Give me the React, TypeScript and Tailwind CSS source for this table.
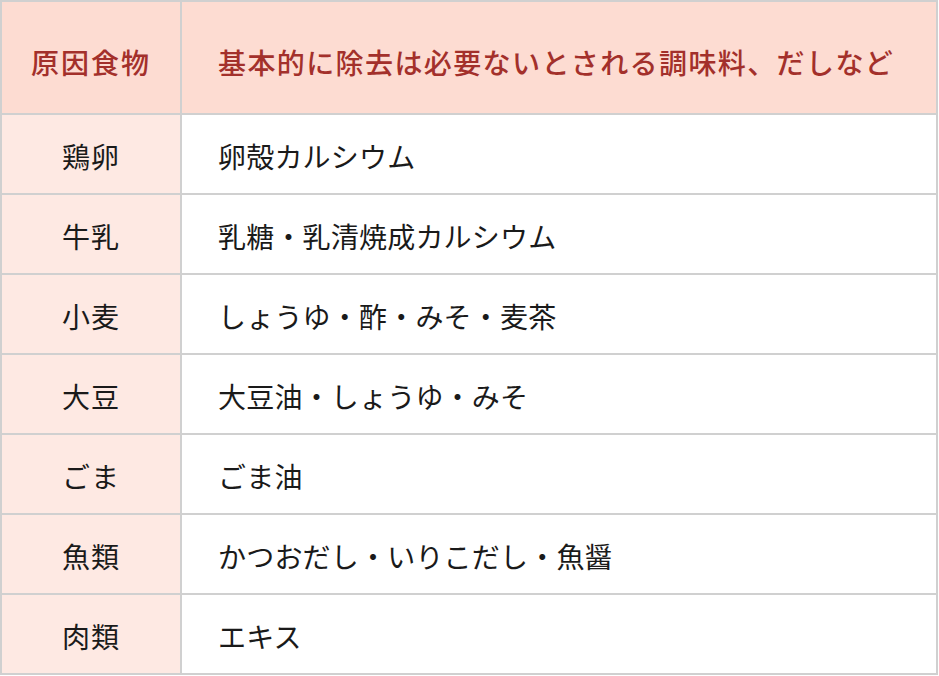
import React from "react";

const rows: [string, string][] = [
  ["鶏卵", "卵殻カルシウム"],
  ["牛乳", "乳糖・乳清焼成カルシウム"],
  ["小麦", "しょうゆ・酢・みそ・麦茶"],
  ["大豆", "大豆油・しょうゆ・みそ"],
  ["ごま", "ごま油"],
  ["魚類", "かつおだし・いりこだし・魚醤"],
  ["肉類", "エキス"],
];

const App: React.FC = () => {
  return (
    <div
      className="w-[938px] bg-white border-2 border-[#d0d0d0] text-[#1a1a1a]"
      style={{ fontFamily: '"Noto Sans CJK JP", "Noto Sans", sans-serif' }}
    >
      <div className="flex h-[113px] border-b-2 border-[#d0d0d0] bg-[#fddcd2] text-[#a3302b] text-[28px] font-medium">
        <div className="w-[180px] shrink-0 border-r-2 border-[#d0d0d0] flex items-center justify-center pt-2 tracking-[2px]">
          原因食物
        </div>
        <div className="flex-1 flex items-center pl-[36px] pt-2 tracking-[1.4px] whitespace-nowrap">
          基本的に除去は必要ないとされる調味料、だしなど
        </div>
      </div>
      {rows.map(([food, item], i) => (
        <div
          key={i}
          className={
            i < rows.length - 1
              ? "flex h-[80px] border-b-2 border-[#d0d0d0] text-[28px]"
              : "flex h-[78px] text-[28px]"
          }
        >
          <div className="w-[180px] shrink-0 border-r-2 border-[#d0d0d0] bg-[#fee9e3] flex items-center justify-center pt-1 tracking-[1px]">
            {food}
          </div>
          <div className="flex-1 flex items-center pl-[36px] pt-1 tracking-[0.2px] whitespace-nowrap">
            {item}
          </div>
        </div>
      ))}
    </div>
  );
};

export default App;
